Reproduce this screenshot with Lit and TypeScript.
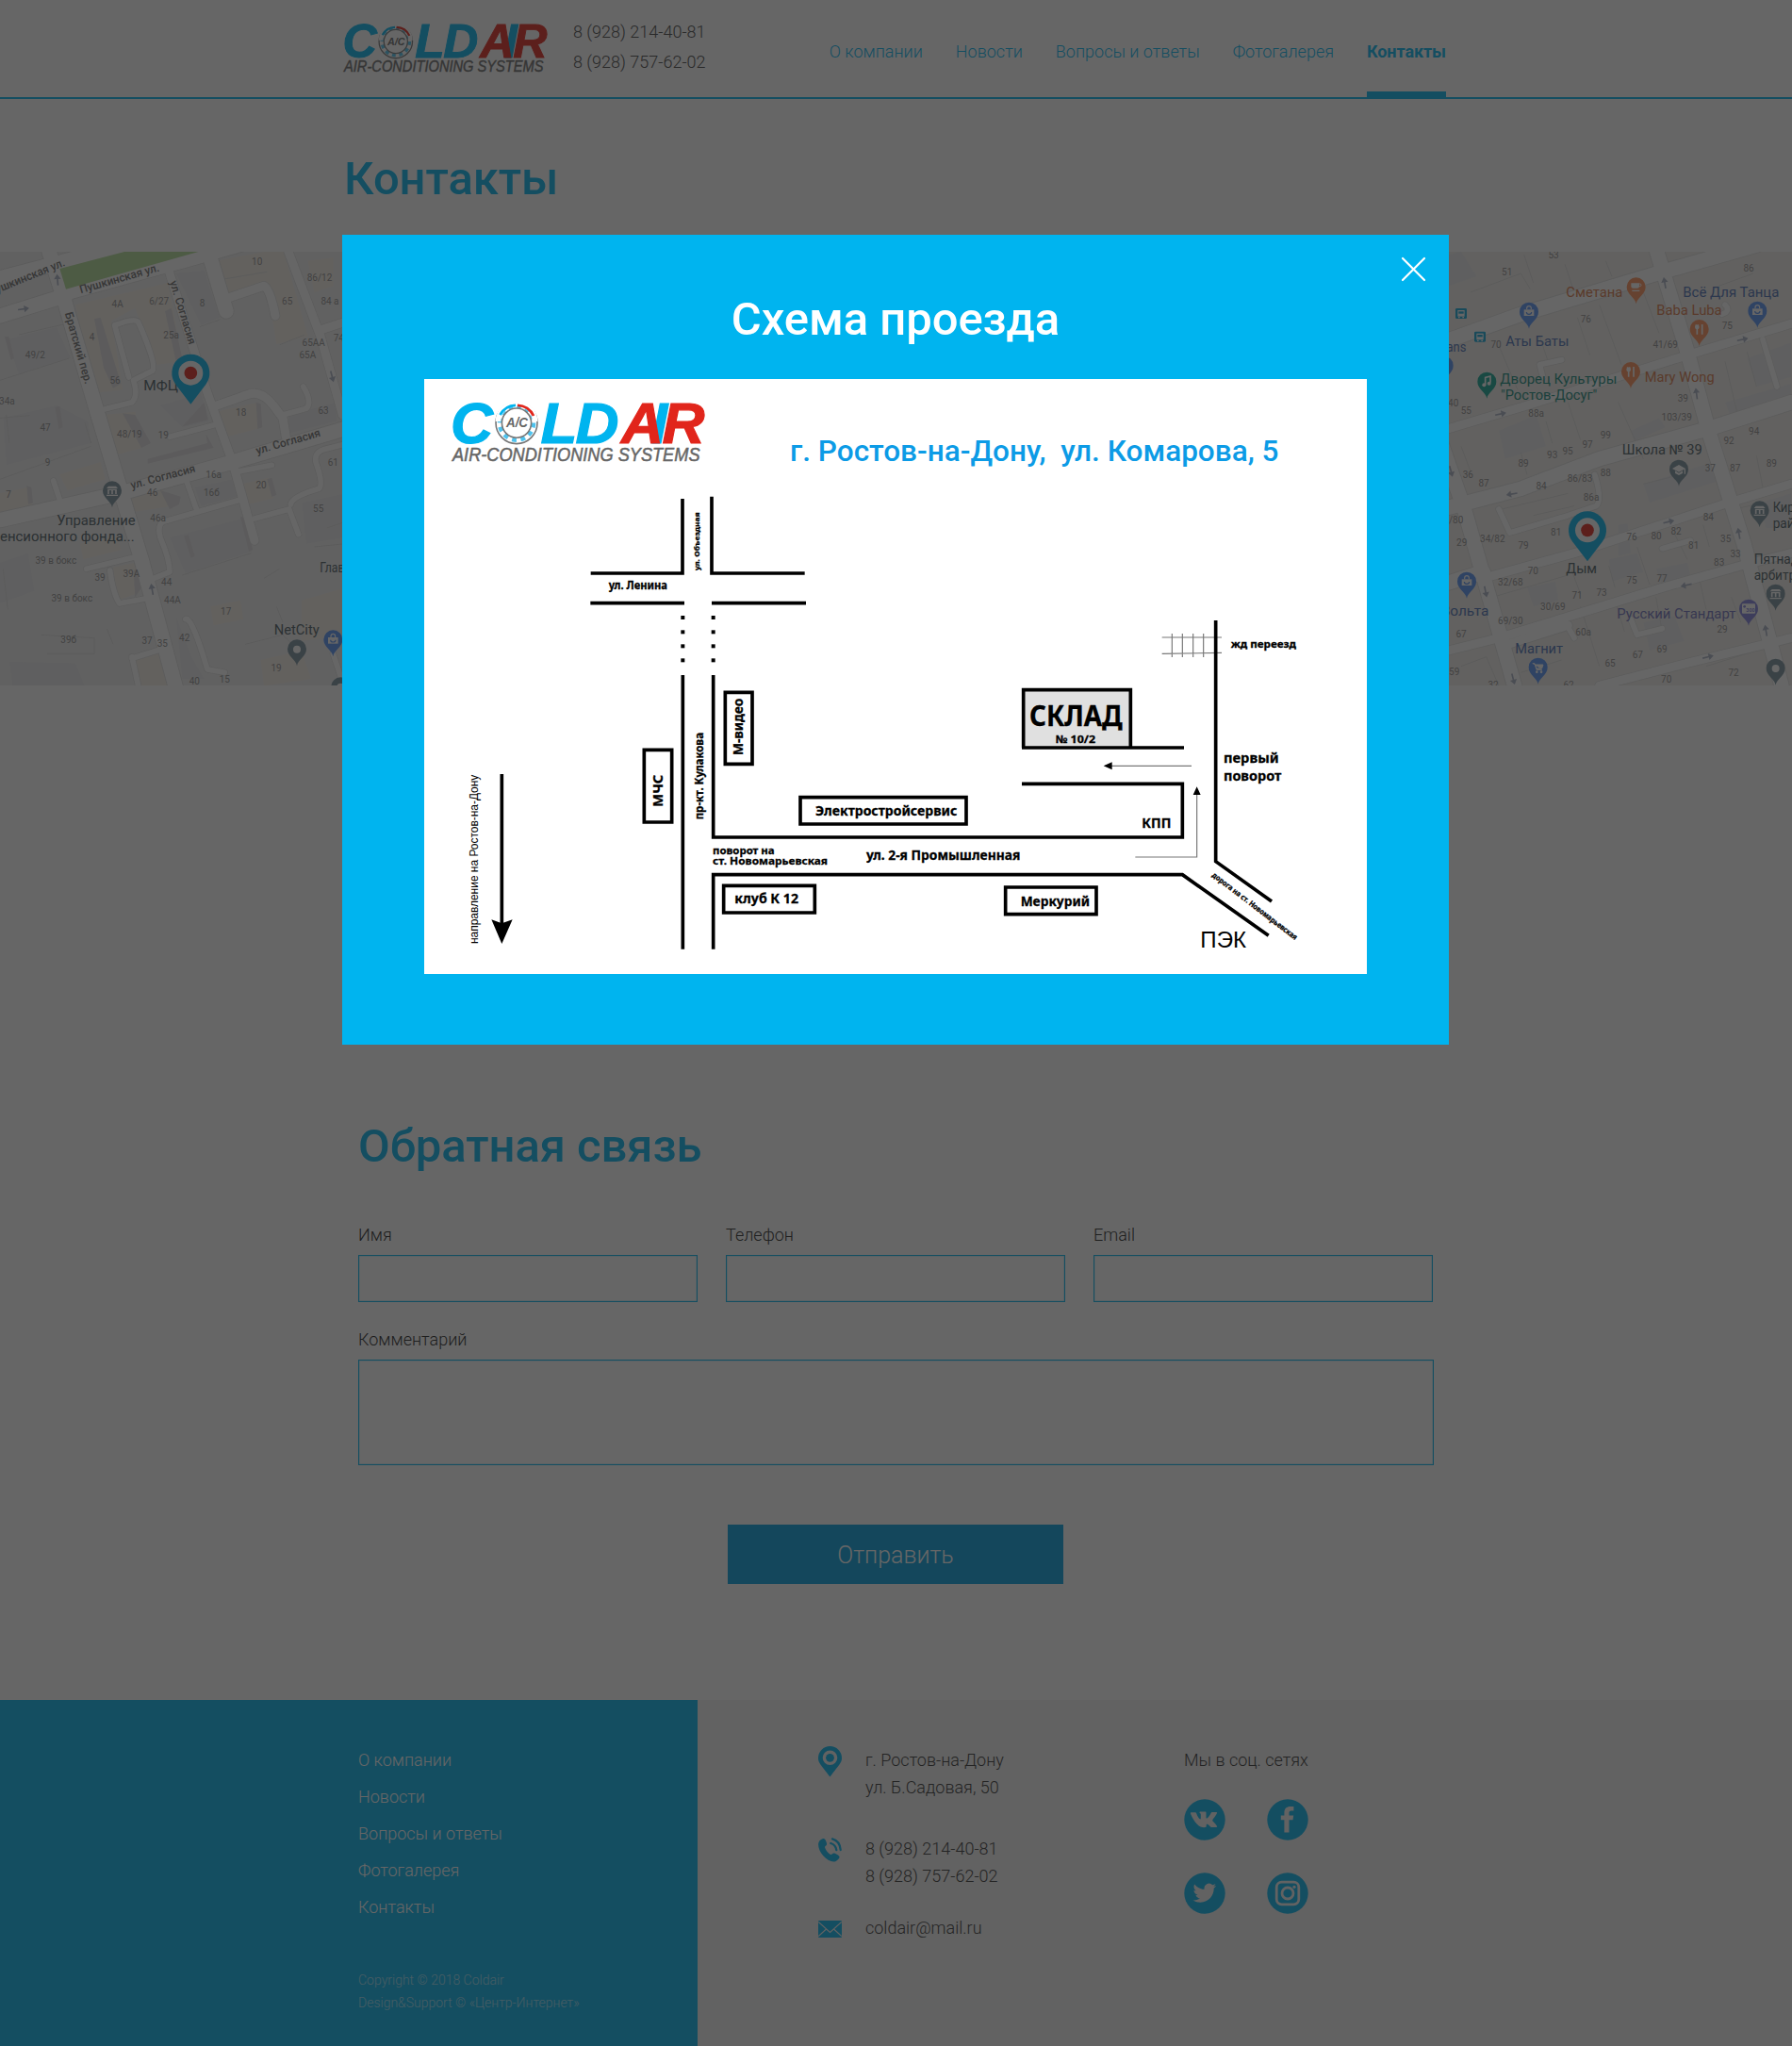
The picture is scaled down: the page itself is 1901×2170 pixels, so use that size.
import { LitElement, html, svg, css } from "lit";
import { customElement } from "lit/decorators.js";

type Label = [x: number, y: number, size: number, len: number, text: string, rot?: number];

/* One SVG label; len is the drawn width, rot turns it around its start point. */
const label = ([x, y, size, len, text, rot]: Label) => svg`<text x=${x} y=${y} font-size=${size}
  textLength=${len} lengthAdjust="spacingAndGlyphs" transform=${`rotate(${rot ?? 0} ${x} ${y})`}>${text}</text>`;

const centered = ([x, y, text]: [number, number, string]) =>
  svg`<text x=${x} y=${y} text-anchor="middle">${text}</text>`;

/* ---------- logo ---------- */
@customElement("cold-logo")
export class ColdLogo extends LitElement {
  static styles = css`
    :host { display: block; }
    svg { display: block; width: 100%; height: 100%; overflow: visible; }
    .big { font: italic 700 62px "Liberation Sans", Arial, sans-serif; stroke-width: 1.2; }
    .sub { font: italic 400 19.5px "Liberation Sans", Arial, sans-serif; fill: #666; stroke: #666; stroke-width: .5; }
    .ac { font: italic 700 14px "Liberation Sans", Arial, sans-serif; fill: #666; }
    .cold { fill: #00b4ef; stroke: #00b4ef; }
    .hot { fill: #e1251b; stroke: #e1251b; }
  `;
  render() {
    return html`<svg viewBox="0 0 268 66">
      <text class="big cold" x="-2" y="45" textLength="45" lengthAdjust="spacingAndGlyphs">C</text>
      <circle cx="68" cy="23.6" r="22" fill="#fff" stroke="#777" stroke-width="1.6"></circle>
      <circle cx="68" cy="23.6" r="18" fill="none" stroke="#4fc3ee" stroke-width="4.6" stroke-dasharray="4.8 4.6"></circle>
      <path d="M48.5 22 A19.5 19.5 0 0 1 87.5 22" fill="none" stroke="#fff" stroke-width="5.6"></path>
      <path d="M50.5 15 A19.5 19.5 0 0 1 67 4.8" fill="none" stroke="#00b4ef" stroke-width="2.8"></path>
      <path d="M69 4.8 A19.5 19.5 0 0 1 86 16" fill="none" stroke="#e1251b" stroke-width="2.8"></path>
      <circle cx="68" cy="23.6" r="15.6" fill="#fff" stroke="#777" stroke-width="1.6"></circle>
      <text class="ac" x="57" y="28.4" textLength="23" lengthAdjust="spacingAndGlyphs">A/C</text>
      <text class="big cold" x="93.5" y="45" textLength="39" lengthAdjust="spacingAndGlyphs">L</text>
      <text class="big cold" x="130.5" y="45" textLength="46" lengthAdjust="spacingAndGlyphs">D</text>
      <text class="big cold" x="211" y="45">I</text>
      <text class="big hot" x="179" y="45" textLength="45" lengthAdjust="spacingAndGlyphs">A</text>
      <text class="big hot" x="222.5" y="45" textLength="45" lengthAdjust="spacingAndGlyphs">R</text>
      <text class="sub" x="0" y="63.6" textLength="262.5" lengthAdjust="spacingAndGlyphs">AIR-CONDITIONING SYSTEMS</text>
    </svg>`;
  }
}

/* ---------- city map ---------- */
const leftNumbers: [number, number, string][] = [
  [818, 122, "10"], [1017, 174, "86/12"], [374, 258, "4А"], [506, 250, "6/27"], [644, 254, "8"], [914, 250, "65"],
  [1050, 250, "84 а"], [293, 362, "4"], [545, 358, "25а"], [998, 380, "65АА"], [1078, 366, "74"], [979, 421, "65А"],
  [112, 421, "49/2"], [366, 501, "56"], [22, 568, "34а"], [144, 651, "47"], [412, 673, "48/19"], [520, 676, "19"],
  [767, 603, "18"], [1029, 597, "63"], [152, 762, "9"], [680, 802, "16а"], [673, 859, "16б"], [831, 834, "20"],
  [1060, 763, "61"], [27, 864, "7"], [485, 859, "46"], [503, 940, "46а"], [1013, 910, "55"], [178, 1074, "39 в бокс"],
  [318, 1127, "39"], [418, 1116, "39А"], [530, 1144, "44"], [549, 1201, "44А"], [229, 1195, "39 в бокс"],
  [719, 1237, "17"], [218, 1327, "39б"], [468, 1330, "37"], [517, 1338, "35"], [587, 1320, "42"], [879, 1416, "19"],
  [715, 1451, "15"], [619, 1459, "40"],
];
const rightNumbers: [number, number, string][] = [
  [354, 103, "53"], [206, 155, "51"], [975, 145, "86"], [457, 305, "76"], [907, 328, "75"], [171, 387, "70"],
  [710, 388, "41/69"], [35, 574, "40"], [76, 597, "55"], [299, 607, "88а"], [766, 558, "39"], [746, 618, "103/39"],
  [520, 676, "99"], [462, 706, "97"], [399, 727, "95"], [350, 737, "93"], [258, 766, "89"], [82, 802, "36"],
  [132, 828, "87"], [315, 837, "84"], [438, 814, "86/83"], [520, 794, "88"], [474, 872, "86а"], [992, 664, "94"],
  [912, 693, "92"], [853, 781, "37"], [932, 779, "87"], [1048, 766, "89"], [44, 945, "/80"], [62, 1016, "29"],
  [160, 1006, "34/82"], [258, 1025, "79"], [362, 983, "81"], [603, 999, "76"], [681, 997, "80"], [744, 981, "82"],
  [847, 936, "84"], [800, 1026, "81"], [902, 1006, "35"], [933, 1054, "33"], [881, 1079, "83"], [289, 1108, "70"],
  [217, 1143, "32/68"], [603, 1137, "75"], [699, 1130, "77"], [429, 1186, "71"], [507, 1175, "73"],
  [352, 1221, "30/69"], [217, 1265, "69/30"], [60, 1307, "67"], [449, 1301, "60а"], [891, 1294, "29"],
  [699, 1355, "69"], [622, 1374, "67"], [534, 1400, "65"], [38, 1429, "59"], [927, 1432, "72"], [713, 1451, "70"],
  [162, 1471, "32"], [402, 1471, "62"],
];

const glyphs: Record<string, unknown> = {
  bag: svg`<path d="M-16 -8h32v20h-32z" fill="#fff"/><path d="M-7 -8v-4a7 7 0 0 1 14 0v4" fill="none" stroke="#fff" stroke-width="3.5"/><path d="M-8 0a8 7 0 0 0 16 0" fill="none" stroke="#5491f5" stroke-width="3.5"/>`,
  fork: svg`<path d="M-10 -15v9M-4 -15v9M-7 -4v20M9 -16v32" stroke="#fff" stroke-width="5"/><circle cx="-7" cy="-7" r="7" fill="#fff"/>`,
  cup: svg`<path d="M-16 -13h26v10a6 6 0 0 1-6 6h-14a6 6 0 0 1-6-6zM-13 9h24v4h-24z" fill="#fff"/><circle cx="12" cy="-7" r="4" fill="none" stroke="#fff" stroke-width="3"/>`,
  bank: svg`<path d="M-18 -8l6-7h24l6 7zM-14 -6h28v4h-28zM-18 12h36v4h-36z" fill="#fff"/><path d="M-12 -4v14M0 -4v14M12 -4v14" stroke="#fff" stroke-width="5"/>`,
  dot: svg`<circle r="10" fill="#fff" stroke="#fff" stroke-width="4"/>`,
  school: svg`<path d="M-21 -3l21-12 21 12-21 11z" fill="#fff"/><path d="M-12 4v8l12 6 12-6v-8l-12 7zM17-2h4v16h-4z" fill="#fff"/>`,
  music: svg`<path d="M-5 10v-24l16-4v20" fill="none" stroke="#fff" stroke-width="5"/><circle cx="-9" cy="10" r="6" fill="#fff"/><circle cx="7" cy="5" r="6" fill="#fff"/>`,
  cart: svg`<path d="M-18 -13h7l6 20h18M-9 -9h25l-4 12h-17z" fill="#fff" stroke="#fff" stroke-width="3"/><circle cx="-4" cy="14" r="4" fill="#fff"/><circle cx="10" cy="14" r="4" fill="#fff"/>`,
  card: svg`<rect x="-21" y="-17" width="42" height="31" rx="3" fill="#fff"/><circle cx="-13" cy="-8" r="4" fill="#8080dd"/><text x="-8" y="9" font-size="16" font-weight="700" fill="#8080dd">300</text>`,
};
const poi = (x: number, y: number, color: string, glyph: string) => svg`<g transform=${`translate(${x} ${y})`}>
  <path d="M0 53 C-3 32 -30 24 -30 -1 A30 30 0 0 1 30 -1 C30 24 3 32 0 53Z" fill=${color}/>${glyphs[glyph]}</g>`;
const office = (x: number, y: number) => svg`<g transform=${`translate(${x} ${y})`}>
  <path d="M0 99 L-48 36 A60 60 0 1 1 48 36Z" fill="#00b4ef"/><circle r="39" fill="#fff"/><circle r="20.5" fill="#e1251b"/></g>`;
const arrow = (x: number, y: number, rot: number) =>
  svg`<path transform=${`translate(${x} ${y}) rotate(${rot})`} d="M-18 -2.5H2V-11L18 0 2 11V2.5H-18Z" fill="#a9b1c4"/>`;
const bus = (x: number, y: number) => svg`<g transform=${`translate(${x} ${y})`}><rect x="-18" y="-16" width="36" height="33" rx="4" fill="#12a7d8"/>
  <path d="M-11 -10h22v20h-22z" fill="#fff"/><path d="M-8 -6h16v7h-16z" fill="#12a7d8"/><path d="M-9 13h5M4 13h5" stroke="#fff" stroke-width="4"/></g>`;

const slate = "#78909c", blue = "#5491f5", orange = "#ff8f57", teal = "#12a594", violet = "#8080dd";

@customElement("city-map")
export class CityMap extends LitElement {
  static styles = css`
    :host { display: block; height: 460px; font-weight: 400; }
    svg { display: block; width: 100%; height: 100%; }
    text { font-family: Roboto, sans-serif; }
    .num { font-size: 30px; fill: #8e8e8e; }
    .street { fill: #6c6c6c; font-weight: 500; }
    .place { fill: #4a5a62; }
    .shop { fill: #4a6fb5; }
    .food { fill: #d97848; }
    .club { fill: #15897c; }
    .bank { fill: #6f70bd; }
    .road { fill: none; stroke: #fff; stroke-linecap: round; stroke-linejoin: round; }
    .edge { fill: none; stroke: #e0e0e0; stroke-linecap: round; stroke-linejoin: round; }
    .beige { fill: #f6f0e6; }
    .block { fill: #eaeaec; }
    .shade { fill: #dfdde0; }
    .outline { fill: none; stroke: #dedede; stroke-width: 3; }
  `;
  private roads(wide: string, mid: string, thin: string) {
    return svg`
      <path class="edge" stroke-width="22" d=${thin}/><path class="edge" stroke-width="32" d=${mid}/><path class="edge" stroke-width="52" d=${wide}/>
      <path class="road" stroke-width="17" d=${thin}/><path class="road" stroke-width="27" d=${mid}/><path class="road" stroke-width="46" d=${wide}/>`;
  }
  private left() {
    return svg`<g transform="translate(0 240) scale(.33333)">
      <rect x="0" y="80" width="1110" height="1382" fill="#f0f0f0"/>
      <path class="beige" d="M240 250L535 180 580 430 500 440 430 260 355 300 390 520 300 530ZM690 110L900 70 980 350 880 375 850 190 720 225ZM330 600L430 590 450 705 360 730ZM400 850L510 825 550 890 420 910ZM690 590L820 560 835 640 720 670ZM770 820L855 800 870 865 790 885ZM190 790L320 750 335 805 215 840ZM0 850L90 830 105 890 0 910ZM960 1190L1100 1150V1300L960 1320ZM360 1085L430 1070 445 1165 375 1190ZM430 1370L510 1350 540 1462H440ZM830 1380L960 1350 990 1440 840 1462ZM670 1210L765 1190 775 1250 680 1270ZM980 110L1060 100V190L1000 210ZM255 1010L375 985 385 1030 265 1060Z"/>
      <path class="block" d="M20 360L180 320 225 420 60 470ZM10 610L180 570 280 620 290 690 20 760ZM540 990L770 930 800 1035 590 1105ZM510 570L640 530 665 620 580 640ZM560 150L650 140 700 290 640 315ZM920 600L1070 560V620L915 660ZM960 880L1100 850V990L975 1010ZM620 830L740 805 755 860 640 890ZM0 1070L90 1040 110 1160 0 1200ZM30 1385L240 1390 270 1462H40ZM560 1240L610 1370 650 1440H580Z"/>
      <path class="shade" d="M300 295L320 290 385 500 360 515 330 450ZM525 270L545 260 580 420 560 430ZM390 595L430 600 480 690 450 705ZM815 560L830 565 835 640 820 645ZM850 805L865 800 880 855 865 860ZM470 740L660 690 655 660 680 705 470 755ZM510 840L575 860 570 885 540 900ZM650 560L662 615 580 637ZM425 1095L440 1090 450 1150 430 1180ZM85 825L100 830 105 880 90 885ZM175 575L190 572 200 640 187 645ZM15 352L28 350 45 420 35 425ZM585 985L600 982 620 1050 608 1055ZM765 925L775 925 805 1030 792 1035Z"/>
      <path class="outline" d="M0 490L220 420M60 345L210 310 230 410M0 610L95 602M20 600L30 690M270 625L290 690M0 805L290 700M635 320L700 297M890 377L970 345M700 170L850 145M840 1120L890 1090M1000 1020L1100 1010M130 1300L300 1310V1360H150M780 1330L900 1300 940 1340M340 1280L360 1330M880 1210L900 1260M10 1090L25 1220M1040 960L1100 940M580 1110L800 1040"/>
      ${this.roads(
        "M0 165L400 60M0 285L210 220M150 60L200 220 300 560 450 1060 560 1470M0 935L380 850 740 750 1110 640M200 215L600 105 1110 -40M660 70L720 270",
        "M540 150L660 530 740 750 810 1000M910 60L1020 350 1090 600M1020 330L1110 300M690 570L790 535Q830 520 870 570L900 610 910 670M720 230L840 190Q860 200 876 285",
        "M320 585L420 560Q440 540 425 490L485 460Q500 440 440 305 430 290 365 315L410 480M540 670L690 630M900 600L975 580Q995 560 965 510M170 810L190 870M590 800L625 900M765 870L520 940Q500 950 510 990 540 1060 540 1100L490 1120M275 1090L440 1050M350 1095Q360 1170 380 1200L490 1180M590 1250Q610 1240 660 1410L715 1420M420 1370L440 1462M420 1375L500 1350M760 780L865 760M810 930L920 900 950 980M925 885Q930 860 1015 835 1030 820 1005 750 1000 720 1030 710L1110 690M1060 1360L1090 1450")}
      <path d="M190 135L400 80H635L210 200Z" fill="#b2dc97"/>
      ${arrow(75, 263, -8)}${arrow(183, 170, -95)}${arrow(1057, 478, 75)}${arrow(484, 1155, -100)}
      <g class="num">${leftNumbers.map(centered)}</g>
      <g class="street">
        ${label([-32, 222, 36, 260, "Пушкинская ул.", -22])}${label([257, 214, 36, 262, "Пушкинская ул.", -16])}
        ${label([540, 177, 36, 210, "ул. Согласия", 73])}${label([206, 277, 36, 236, "Братский пер.", 74])}
        ${label([419, 836, 36, 212, "ул. Согласия", -15])}${label([818, 726, 36, 212, "ул. Согласия", -16])}
      </g>
      <g class="place">${label([457, 522, 43, 110, "МФЦ"])}${label([181, 951, 43, 250, "Управление"])}
        ${label([-26, 1003, 43, 454, "пенсионного фонда..."])}${label([1018, 1101, 43, 140, "Главная"])}${label([872, 1299, 43, 144, "NetCity"])}</g>
      ${poi(357, 842, slate, "bank")}${poi(945, 1346, slate, "dot")}${poi(1060, 1316, blue, "bag")}${poi(1084, 1466, slate, "dot")}
      ${office(607, 467)}
    </g>`;
  }
  private right() {
    return svg`<g transform="translate(1530 240) scale(.33333)">
      <rect x="0" y="80" width="1120" height="1382" fill="#f3f0eb"/>
      <path class="block" d="M20 90L60 80 110 160 20 190ZM180 650L300 600 330 700 200 740ZM600 650L690 610 710 640 610 685ZM640 820L860 750 880 810 660 880ZM900 560L1110 500V580L930 640ZM970 420L1110 370V480L1000 510ZM530 1060L620 1040 640 1100 540 1130ZM680 1090L780 1070 790 1110 700 1140ZM270 1150L360 1130 370 1190 290 1210ZM560 950L590 945 600 1040 560 1050ZM640 1260L740 1240 770 1320 660 1350ZM1010 880L1110 850V960H1030Z"/>
      <path class="outline" d="M90 210L250 150 280 200M260 90L290 180M390 120L420 210M520 110L540 160M180 380L240 520M310 350L340 440M500 250L570 440M430 290L470 410M640 210L690 340M560 560L640 740M400 560L440 680M330 620L350 690M60 700L90 780M250 720L270 790M640 820L760 790M190 900L400 850M290 920L420 890M530 1080L550 1150M410 1090L440 1170M620 1020L660 1140M740 980L780 1060M830 950L850 1020M900 430L940 600M970 400L1000 510M880 190L990 150M780 110L890 90M160 1180L400 1110M440 1210L500 1400M550 1190L580 1290M680 1180L700 1290M820 1130L840 1220M240 1300L400 1260M60 1400L140 1370 180 1462M250 1420L380 1380M840 1400L1000 1350M920 1180L950 1260M930 900L1020 880M1000 730L1020 830"/>
      ${this.roads(
        "M0 370L250 280 700 145 1000 60M0 900L250 835 500 740 860 640 1110 560M680 70L780 400 850 660 960 1010 1080 1462M0 700L70 900 230 1462M130 1100L0 1140",
        "M0 650L270 570 780 410 1110 310M130 1120L420 1040 910 880 1110 820M0 1355L180 1310 700 1150 950 1080 1110 1040M500 1462L800 1385 1110 1310M210 1330L400 1270",
        "M180 900L215 975 400 920 490 890Q510 870 485 790M320 480L310 440 380 425M1020 360L1065 510M700 1025L790 1000M400 1275L420 1310M600 1250L620 1300 700 1280M890 280Q920 270 900 250")}
      ${arrow(708, 180, -100)}${arrow(956, 360, -12)}${arrow(809, 532, -98)}${arrow(186, 597, -12)}${arrow(28, 780, 75)}
      ${arrow(221, 852, 170)}${arrow(721, 940, -14)}${arrow(944, 977, -100)}${arrow(138, 1163, 78)}${arrow(776, 1142, 168)}
      ${arrow(1030, 1286, -100)}${arrow(846, 1370, -14)}${arrow(226, 1441, 75)}
      <g class="num">${rightNumbers.map(centered)}</g>
      <g class="food">${label([394, 224, 43, 180, "Сметана"])}${label([682, 282, 43, 208, "Baba Luba"])}${label([644, 494, 43, 222, "Mary Wong"])}</g>
      <g class="shop">${label([766, 224, 43, 306, "Всё Для Танца"])}${label([202, 381, 43, 201, "Аты Баты"])}${label([-86, 398, 43, 162, "Sunmans"])}
        ${label([-4, 1239, 43, 152, "Вольта"])}${label([232, 1358, 43, 152, "Магнит"])}</g>
      <g class="club">${label([184, 500, 43, 372, "Дворец Культуры"])}${label([186, 551, 43, 307, '"Ростов-Досуг"'])}</g>
      <g class="place">${label([572, 726, 43, 255, "Школа № 39"])}${label([394, 1105, 43, 98, "Дым"])}${label([1052, 909, 43, 200, "Кировский"])}
        ${label([1052, 960, 43, 116, "район"])}${label([992, 1073, 43, 208, "Пятнадцат"])}${label([992, 1124, 43, 242, "арбитражны"])}</g>
      <g class="bank">${label([556, 1249, 43, 378, "Русский Стандарт"])}</g>
      ${bus(60, 277)}${bus(120, 351)}
      ${poi(617, 194, orange, "cup")}${poi(818, 328, orange, "fork")}${poi(600, 463, orange, "fork")}
      ${poi(276, 273, blue, "bag")}${poi(1003, 270, blue, "bag")}${poi(5, 444, blue, "bag")}${poi(78, 1131, blue, "bag")}${poi(305, 1404, blue, "cart")}
      ${poi(142, 495, teal, "music")}${poi(753, 774, slate, "school")}${poi(1010, 905, slate, "bank")}${poi(1061, 1170, slate, "bank")}
      ${poi(1061, 1407, slate, "dot")}${poi(975, 1218, violet, "card")}
      ${office(462, 967)}
    </g>`;
  }
  render() {
    return html`<svg viewBox="0 267 1901 460"><rect x="0" y="267" width="1901" height="460" fill="#f3f1ee"></rect>${this.left()}${this.right()}</svg>`;
  }
}

/* ---------- driving directions ---------- */
@customElement("route-scheme")
export class RouteScheme extends LitElement {
  static styles = css`
    :host { display: block; position: relative; width: 1000px; height: 630.5px; background: #fff; }
    .plan { display: block; width: 100%; height: 100%; }
    .logo { position: absolute; left: 30px; top: 23px; width: 268px; height: 66px; }
    .ink { fill: none; stroke: #000; stroke-width: 11; }
    .thin { fill: none; stroke: #777; stroke-width: 3.5; }
    .bold { font-family: "Noto Sans", "Open Sans", sans-serif; font-weight: 700; stroke: #000; stroke-width: .9; }
    .plain { font-family: "Liberation Sans", Arial, sans-serif; }
    .address { font-family: Roboto, sans-serif; font-weight: 500; fill: #0c9be6; }
  `;
  render() {
    return html`
      <svg class="plan" viewBox="450 402 1000 630.5">
        <g class="address">${label([838, 489.3, 31.5, 518.5, "г. Ростов-на-Дону,\u00a0 ул. Комарова, 5"])}</g>
        <g transform="translate(440 390) scale(.33333)">
          <path class="ink" d="M852 417V654H560M945 410V654H1241M559 749H858M945 749H1245"></path>
          ${[795, 841, 886, 931].map((y) => svg`<rect x="847" y=${y - 6} width="12" height="12"/><rect x="944" y=${y - 6} width="12" height="12"/>`)}
          <g class="bold">${label([617, 706, 35, 187, "ул. Ленина"])}${label([907, 645, 22, 185, "ул. Объездная", -90])}</g>
        </g>
        <g transform="translate(440 700) scale(.33333)">
          <path class="ink" d="M853 48V920M730 286H818V516H730ZM988 103H1074V331H988ZM983 718H1273V804H983ZM277 363V840"></path>
          <path d="M244 826L277 903 311 826 277 838Z"></path>
          <g class="bold">
            ${label([948, 617, 34, 197, "поворот на"])}${label([948, 652, 34, 366, "ст. Новомарьевская"])}${label([1018, 773, 43, 203, "клуб К 12"])}
            ${label([790, 467, 45, 102, "МЧС", -90])}${label([1045, 303, 43, 181, "М-видео", -90])}${label([918, 508, 35, 277, "пр-кт. Кулакова", -90])}
          </g>
          <g class="plain">${label([201, 903, 36, 538, "направление на Ростов-на-Дону", -90])}</g>
        </g>
        <g transform="translate(960 640) scale(.33333)">
          <rect x="377" y="275" width="341" height="184" fill="#e0e0e0"></rect>
          <path class="thin" d="M818 108H1008M818 160L1008 157M850 96V171M883 96V171M917 96V171M950 96V171M912 517H650M733 807H929V605"></path>
          <path d="M632 517L659 505V529ZM929 583L917 609H941Z"></path>
          <path class="ink" d="M377 459V275H718V459M372 459H888M-610 228V744H883V574H372M-610 1100V863H883L1157 1057M989 54V821L1167 948M-333 617H195V702H-333ZM320 903H609V989H320Z"></path>
          <g class="bold">
            ${label([1037, 142, 33, 208, "жд переезд"])}${label([1014, 508, 44, 176, "первый"])}${label([1014, 563, 44, 184, "поворот"])}
            ${label([754, 713, 45, 93, "КПП"])}${label([396, 389, 89, 296, "СКЛАД"])}${label([479, 445, 34, 127, "№ 10/2"])}
            ${label([368, 962, 43, 220, "Меркурий"])}${label([-285, 676, 42, 451, "Электростройсервис"])}${label([-123, 817, 42, 490, "ул. 2-я Промышленная"])}
            ${label([976, 868, 24, 334, "дорога на ст. Новомарьевская", 37.5])}
          </g>
          <g class="plain">${label([940, 1096, 74, 146, "ПЭК"])}</g>
        </g>
      </svg>
      <cold-logo class="logo"></cold-logo>`;
  }
}

/* ---------- page ---------- */
const pages = ["О компании", "Новости", "Вопросы и ответы", "Фотогалерея", "Контакты"];

const pinIcon = svg`<svg class="ico" width="25" height="33" viewBox="0 0 25 33"><path fill-rule="evenodd" fill="#00b4ef" d="M12.5 0A12.5 12.5 0 0 0 0 12.5C0 17.5 2.5 19.5 12.5 32.5 22.5 19.5 25 17.5 25 12.5A12.5 12.5 0 0 0 12.5 0ZM12.5 4.5A7.8 7.8 0 1 1 12.5 20.1 7.8 7.8 0 0 1 12.5 4.5Z"/><circle cx="12.5" cy="12.3" r="4.4" fill="#00b4ef"/></svg>`;
const phoneIcon = svg`<svg class="ico" width="25" height="26" viewBox="0 0 25 26"><path fill="#00b4ef" d="M4.5 1.2C6.5 .4 7.3 1.5 8.4 4.2 9.6 7 9.2 7.6 7.6 8.9 6.6 9.8 7 11 8.4 13.3 10 15.9 11.6 17.4 13.2 17.9 14.4 18.2 15.2 16.7 16.5 16.6 18 16.6 21.6 18.8 22.4 20 23.2 21.4 20.7 24.4 18.3 25.2 14.5 26.4 9.2 23.8 5.3 19.2 1.5 14.6-.3 9.8.2 6.2.5 3.6 2.5 2 4.5 1.2Z"/><path fill="none" stroke="#00b4ef" stroke-width="2.3" stroke-linecap="round" d="M15 1.3Q23 3.5 23.7 13M13.3 6Q18.6 7.5 19.3 13.2"/></svg>`;
const mailIcon = svg`<svg class="ico" width="25" height="18" viewBox="0 0 25 18"><rect width="25" height="18" rx="1" fill="#00b4ef"/><path fill="none" stroke="#f2f2f2" stroke-width="1.1" d="M.3 1.5L12.5 12.5 24.7 1.5M.3 16.5L8.5 9M24.7 16.5L16.5 9"/></svg>`;

const social = [
  svg`<path fill="#f2f2f2" d="M7.4 14.2h4.6c.6 0 .9.3 1.1.9 1.1 3.2 3 6.3 4.1 6.3.5 0 .6-.4.6-1.3v-3.6c-.1-1.7-1.4-1.5-1.4-2.2 0-.4.4-.7.8-.7h5.4c.7 0 .9.4.9 1.1v5c0 .7.3.9.5.9.5 0 1-.4 1.9-1.3 1.6-1.9 2.7-4.3 2.8-4.6.2-.4.5-.7 1.1-.7h4.3c1 0 1.1.5.9 1.1-.5 1.8-4.2 6.4-4.5 6.9-.5.6-.4.9 0 1.4.5.6 3.8 3.6 4.6 5.5.3.8-.1 1.2-1 1.2h-4.6c-.9 0-1.2-.5-2.4-1.7-1.5-1.5-2.3-1.7-2.6-1.7-.5 0-.8.2-.8.9v1.5c0 .7-.3 1.1-2.3 1.1-3.3 0-6.9-2-9.5-5.7-3.8-5.3-5-9-5-9.4 0-.5.2-.9.5-.9z"/>`,
  svg`<path fill="#f2f2f2" d="M18.4 35.5V22.3h-3.6v-4.9h3.6v-3c0-4.4 2.5-6.5 6.4-6.5 1.7 0 3.1.1 3.6.2v4.3h-2.6c-1.9 0-2.3 1-2.3 2.3v2.7h4.7l-.7 4.9h-4v13.2z"/>`,
  svg`<path fill="#f2f2f2" transform="translate(9.5 9.3) scale(1.03)" d="M23.95 4.57a10 10 0 0 1-2.82.77 4.96 4.96 0 0 0 2.16-2.72c-.95.55-2 .95-3.13 1.18a4.92 4.92 0 0 0-8.38 4.48C7.69 8.1 4.07 6.13 1.64 3.16a4.92 4.92 0 0 0 1.52 6.57 4.9 4.9 0 0 1-2.23-.61v.06c0 2.38 1.7 4.37 3.95 4.83a5 5 0 0 1-2.21.08 4.94 4.94 0 0 0 4.6 3.42A9.87 9.87 0 0 1 0 19.54a14 14 0 0 0 7.55 2.21c9.05 0 14-7.5 14-13.98 0-.21 0-.42-.02-.63a9.94 9.94 0 0 0 2.46-2.55z"/>`,
  svg`<g fill="none" stroke="#f2f2f2" stroke-width="2.8"><rect x="10.2" y="10.2" width="23.6" height="23.6" rx="5.5"/><circle cx="22" cy="22" r="6"/></g><circle cx="29" cy="15.3" r="1.6" fill="#f2f2f2"/>`,
];

@customElement("app-root")
export class AppRoot extends LitElement {
  static styles = css`
    :host { display: block; position: relative; width: 100%; height: 2170px; overflow: hidden; background: #fff;
      font: 300 18px/29px Roboto, sans-serif; color: #333; }
    * { box-sizing: border-box; }
    .page { display: flex; flex-direction: column; height: 2170px; }
    .wrap { width: 1171px; margin: 0 auto; }
    header { height: 105px; border-bottom: 2px solid #00b4ef; }
    header .wrap { display: flex; height: 103px; }
    .logo { width: 216px; height: 53.2px; margin-top: 24.5px; }
    .tel { margin: 18px 0 0 27px; line-height: 32px; color: #444; width: 160px; }
    .menu { display: flex; gap: 35px; margin-left: auto; padding-right: 2px; color: #00b4ef; }
    .menu span { display: block; height: 103px; padding-top: 40px; white-space: nowrap; }
    .menu .on { width: 84px; font-weight: 700; letter-spacing: -.1px; border-bottom: 6px solid #00b4ef; }
    h1, h2 { margin: 0; font-weight: 500; font-size: 49px; line-height: 56px; letter-spacing: -.06px; color: #00b4ef; }
    h1 { padding: 57px 0 49px; }
    .form { padding: 461px 15px 0; height: 1076px; }
    .form h2 { margin-bottom: 55px; }
    .row { display: grid; grid-template-columns: repeat(3, 360px); gap: 30px; margin-bottom: 29px; }
    .field { display: flex; flex-direction: column; gap: 10px; line-height: 22px; color: #222; }
    .box { height: 50px; border: 1px solid #00b4ef; box-shadow: inset 0 0 0 .5px #b0e6f8; }
    .box.tall { height: 112px; }
    .send { width: 356px; height: 63px; margin: 63px 0 0 392px; background: #009fe0; color: #fff; font-size: 25px;
      line-height: 65px; text-align: center; font-weight: 300; }
    footer { display: flex; flex: 1; background: #f2f2f2; }
    .side { width: 740px; padding: 43.5px 0 0 380px; background: #00b4ef; color: #fff; line-height: 39px; }
    .copy { margin-top: 46px; font-size: 14px; line-height: 24px; opacity: .6; }
    .contacts { width: 388px; margin-left: 128px; padding-top: 49px; color: #333; }
    .line { display: flex; gap: 25px; margin-bottom: 36px; }
    .line.call { margin-bottom: 26px; }
    .ico { display: block; flex: none; }
    .call .ico { margin-top: 3px; }
    .mail .ico { margin-top: 7px; }
    .net { padding-top: 49px; }
    .icons { display: grid; grid-template-columns: 44px 44px; gap: 34.5px 44px; margin-top: 26.5px; }
    .icons svg { display: block; }
    .veil { position: absolute; inset: 0; background: rgba(30, 30, 30, .68); }
    .modal { position: absolute; left: 363px; top: 249px; width: 1174px; height: 859px; background: #00b4ef;
      display: flex; flex-direction: column; align-items: center; }
    .modal h2 { color: #fff; margin: 61.5px 0 35.5px; }
    .close { position: absolute; right: 24px; top: 23px; }
  `;
  render() {
    return html`
      <div class="page">
        <header><div class="wrap">
          <cold-logo class="logo"></cold-logo>
          <div class="tel">8 (928) 214-40-81<br />8 (928) 757-62-02</div>
          <nav class="menu">${pages.map((p, i) => html`<span class=${i === 4 ? "on" : ""}>${p}</span>`)}</nav>
        </div></header>
        <h1 class="wrap">Контакты</h1>
        <city-map></city-map>
        <section class="wrap form">
          <h2>Обратная связь</h2>
          <div class="row">
            ${["Имя", "Телефон", "Email"].map((f) => html`<div class="field"><span>${f}</span><div class="box"></div></div>`)}
          </div>
          <div class="field"><span>Комментарий</span><div class="box tall"></div></div>
          <div class="send">Отправить</div>
        </section>
        <footer>
          <div class="side">
            ${pages.map((p) => html`<div>${p}</div>`)}
            <div class="copy">Copyright © 2018 Coldair<br />Design&amp;Support © «Центр-Интернет»</div>
          </div>
          <div class="contacts">
            <div class="line">${pinIcon}<div>г. Ростов-на-Дону<br />ул. Б.Садовая, 50</div></div>
            <div class="line call">${phoneIcon}<div>8 (928) 214-40-81<br />8 (928) 757-62-02</div></div>
            <div class="line mail">${mailIcon}<div>coldair@mail.ru</div></div>
          </div>
          <div class="net">
            <div>Мы в соц. сетях</div>
            <div class="icons">${social.map((s) => html`<svg width="44" height="44" viewBox="0 0 44 44"><circle cx="22" cy="22" r="21.7" fill="#00b4ef"></circle>${s}</svg>`)}</div>
          </div>
        </footer>
      </div>
      <div class="veil"></div>
      <div class="modal">
        <h2>Схема проезда</h2>
        <route-scheme></route-scheme>
        <svg class="close" width="27" height="27" viewBox="0 0 27 27"><path d="M2 2L25 25M25 2L2 25" stroke="#fff" stroke-width="2.2" stroke-linecap="round"></path></svg>
      </div>`;
  }
}
